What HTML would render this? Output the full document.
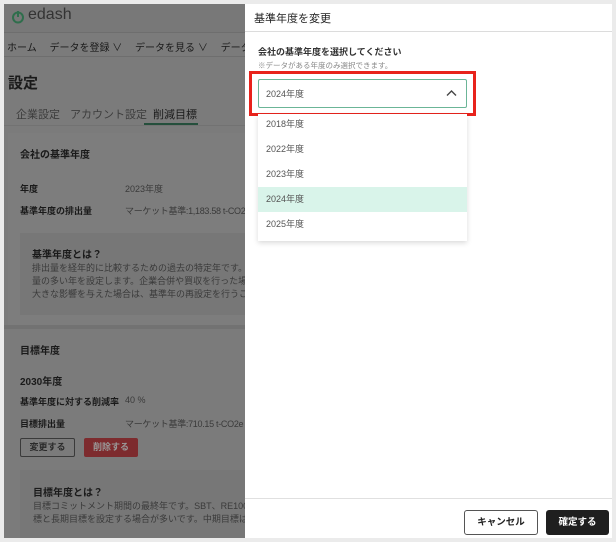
<!DOCTYPE html>
<html><head><meta charset="utf-8"><style>
*{margin:0;padding:0;box-sizing:border-box}
body{width:616px;height:542px;background:#ebebeb;font-family:"Liberation Sans","Noto Sans CJK JP",sans-serif;position:relative;overflow:hidden;color:#222}
.a{position:absolute;white-space:nowrap}
#left{position:absolute;left:4px;top:4px;width:241px;height:534px;background:#7b7b7b;overflow:hidden}
#right{position:absolute;left:245px;top:4px;width:367px;height:534px;background:#fff}
.t{color:#1a1a1a}
.g{color:#3a3a3a}
</style></head><body>
<div id="left">
  <div class="a" style="left:0;top:0;width:241px;height:28px;background:#787878"></div>
  <svg class="a" style="left:7px;top:6px" width="14" height="14" viewBox="0 0 14 14"><circle cx="7" cy="7.5" r="5" fill="none" stroke="#2f6e4c" stroke-width="2"/><line x1="7" y1="1" x2="7" y2="7" stroke="#2f6e4c" stroke-width="2"/></svg>
  <div class="a" style="left:24px;top:2px;font-size:16px;color:#333">edash</div>
  <div class="a" style="left:0;top:28px;width:241px;height:1px;background:#6e6e6e"></div>
  <div class="a t" style="left:3px;top:35px;font-size:10px">ホーム　 データを登録 ∨　 データを見る ∨　 データを</div>
  <div class="a" style="left:0;top:52px;width:241px;height:1px;background:#6e6e6e"></div>
  <div class="a t" style="left:4px;top:68px;font-size:15px;font-weight:bold">設定</div>
  <div class="a" style="left:12px;top:102px;font-size:11px;color:#3d3d3d">企業設定</div>
  <div class="a" style="left:66px;top:102px;font-size:11px;color:#3d3d3d">アカウント設定</div>
  <div class="a t" style="left:149px;top:102px;font-size:11px">削減目標</div>
  <div class="a" style="left:140px;top:119px;width:54px;height:2px;background:#254f3c"></div>
  <div class="a" style="left:0;top:121px;width:241px;height:1px;background:#727272"></div>
  <div class="a" style="left:4px;top:129px;width:237px;height:192px;background:#7d7d7d"></div>
  <div class="a t" style="left:16px;top:142px;font-size:10px;font-weight:bold">会社の基準年度</div>
  <div class="a t" style="left:16px;top:178px;font-size:9px;font-weight:bold">年度</div>
  <div class="a g" style="left:121px;top:178px;font-size:9px">2023年度</div>
  <div class="a t" style="left:16px;top:200px;font-size:9px;font-weight:bold">基準年度の排出量</div>
  <div class="a g" style="left:121px;top:200px;font-size:9px;letter-spacing:-0.3px">マーケット基準:1,183.58 t-CO2</div>
  <div class="a" style="left:16px;top:229px;width:225px;height:82px;background:#777"></div>
  <div class="a t" style="left:28px;top:242px;font-size:10px;font-weight:bold">基準年度とは？</div>
  <div class="a g" style="left:28px;top:258px;font-size:9px;line-height:13px">排出量を経年的に比較するための過去の特定年です。データ<br>量の多い年を設定します。企業合併や買収を行った場合、<br>大きな影響を与えた場合は、基準年の再設定を行うことが</div>
  <div class="a" style="left:0;top:321px;width:241px;height:4px;background:#727272"></div>
  <div class="a t" style="left:16px;top:338px;font-size:10px;font-weight:bold">目標年度</div>
  <div class="a t" style="left:16px;top:369px;font-size:10px;font-weight:bold">2030年度</div>
  <div class="a t" style="left:16px;top:391px;font-size:9px;font-weight:bold">基準年度に対する削減率</div>
  <div class="a g" style="left:121px;top:391px;font-size:9px">40 %</div>
  <div class="a t" style="left:16px;top:413px;font-size:9px;font-weight:bold">目標排出量</div>
  <div class="a g" style="left:121px;top:413px;font-size:9px;letter-spacing:-0.3px">マーケット基準:710.15 t-CO2e</div>
  <div class="a" style="left:16px;top:434px;width:55px;height:19px;border:1px solid #3a3a3a;border-radius:2px;font-size:9px;text-align:center;line-height:17px;font-weight:bold;color:#2a2a2a">変更する</div>
  <div class="a" style="left:80px;top:434px;width:54px;height:19px;background:#7d2b2e;border-radius:2px;font-size:9px;text-align:center;line-height:19px;font-weight:bold;color:#9a9a9a">削除する</div>
  <div class="a" style="left:16px;top:466px;width:225px;height:68px;background:#777"></div>
  <div class="a t" style="left:29px;top:480px;font-size:10px;font-weight:bold">目標年度とは？</div>
  <div class="a g" style="left:29px;top:496px;font-size:9px;line-height:13px">目標コミットメント期間の最終年です。SBT、RE100等、<br>標と長期目標を設定する場合が多いです。中期目標は203</div>
</div>
<div id="right">
  <div class="a" style="left:9px;top:6px;font-size:11px;color:#222">基準年度を変更</div>
  <div class="a" style="left:0;top:27px;width:367px;height:1px;background:#dcdcdc"></div>
  <div class="a" style="left:13px;top:41px;font-size:9px;font-weight:bold;color:#333">会社の基準年度を選択してください</div>
  <div class="a" style="left:13px;top:56px;font-size:7.5px;color:#888">※データがある年度のみ選択できます。</div>
  <div class="a" style="left:4px;top:67px;width:227px;height:45px;border:3px solid #e8231c"></div>
  <div class="a" style="left:13px;top:75px;width:209px;height:29px;border:1px solid #6bb597;border-radius:2px"></div>
  <div class="a" style="left:21px;top:83px;font-size:9px;color:#555">2024年度</div>
  <svg class="a" style="left:201px;top:85px" width="11" height="8" viewBox="0 0 11 8"><path d="M1 6.5L5.5 2L10 6.5" fill="none" stroke="#444" stroke-width="1.4"/></svg>
  <div class="a" style="left:13px;top:110px;width:209px;height:127px;background:#fff;box-shadow:0 2px 5px rgba(0,0,0,.15)"></div>
  <div class="a" style="left:13px;top:183px;width:209px;height:25px;background:#d9f4ea"></div>
  <div class="a" style="left:21px;top:108px;font-size:9px;color:#555;line-height:25px">2018年度<br>2022年度<br>2023年度<br>2024年度<br>2025年度</div>
  <div class="a" style="left:0;top:494px;width:367px;height:1px;background:#e0e0e0"></div>
  <div class="a" style="left:219px;top:506px;width:74px;height:25px;border:1px solid #555;border-radius:3px;font-size:9.5px;font-weight:bold;text-align:center;line-height:23px;color:#222">キャンセル</div>
  <div class="a" style="left:301px;top:506px;width:63px;height:25px;background:#1f1f1f;border-radius:3px;font-size:9.5px;font-weight:bold;text-align:center;line-height:25px;color:#fff">確定する</div>
</div>
</body></html>
